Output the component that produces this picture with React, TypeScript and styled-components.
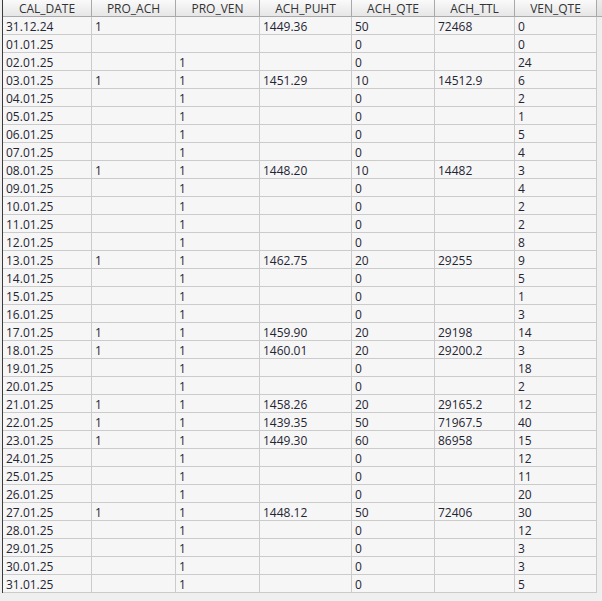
import React from "react";
import styled, { createGlobalStyle } from "styled-components";

const Global = createGlobalStyle`
  html, body { margin: 0; padding: 0; background: #efefef; }
  body { font-family: "Open Sans", "Noto Sans", sans-serif; font-size: 12px; }
`;

const COLS = "89px 84px 84px 92px 83px 80px 82px";

const Frame = styled.div`
  width: 602px;
  height: 601px;
  padding-left: 2px;
  box-sizing: border-box;
  background: #efefef;
  overflow: hidden;
`;

const Table = styled.div`
  border-left: 1px solid #3a3a3a;
  display: flex;
  flex-direction: column;
`;

const HeaderRow = styled.div`
  display: grid;
  grid-template-columns: ${COLS} 1fr;
  height: 17px;
`;

const HeadCell = styled.div`
  box-sizing: border-box;
  border-right: 1px solid #a9a9a9;
  border-bottom: 1px solid #a9a9a9;
  background: linear-gradient(#fafafa, #e6e6e6);
  color: #333;
  text-align: center;
  padding-top: 1px;
  line-height: 16px;
  font-size: 12px;
  white-space: nowrap;
  overflow: hidden;
`;

const HeadFiller = styled.div`
  box-sizing: border-box;
  border-bottom: 1px solid #a9a9a9;
  background: linear-gradient(#ececec, #dedede);
`;

const Row = styled.div`
  display: grid;
  grid-template-columns: ${COLS};
  height: 18px;
`;

const Cell = styled.div`
  box-sizing: border-box;
  border-right: 1px solid #cbcbcb;
  border-bottom: 1px solid #cbcbcb;
  background: #f6f6f6;
  color: #1f2533;
  padding-left: 3px;
  padding-top: 1px;
  line-height: 17px;
  font-size: 12px;
  white-space: nowrap;
  overflow: hidden;
`;

const headers = ["CAL_DATE", "PRO_ACH", "PRO_VEN", "ACH_PUHT", "ACH_QTE", "ACH_TTL", "VEN_QTE"];

const data: string[][] = [
  ["31.12.24", "1", "", "1449.36", "50", "72468", "0"],
  ["01.01.25", "", "", "", "0", "", "0"],
  ["02.01.25", "", "1", "", "0", "", "24"],
  ["03.01.25", "1", "1", "1451.29", "10", "14512.9", "6"],
  ["04.01.25", "", "1", "", "0", "", "2"],
  ["05.01.25", "", "1", "", "0", "", "1"],
  ["06.01.25", "", "1", "", "0", "", "5"],
  ["07.01.25", "", "1", "", "0", "", "4"],
  ["08.01.25", "1", "1", "1448.20", "10", "14482", "3"],
  ["09.01.25", "", "1", "", "0", "", "4"],
  ["10.01.25", "", "1", "", "0", "", "2"],
  ["11.01.25", "", "1", "", "0", "", "2"],
  ["12.01.25", "", "1", "", "0", "", "8"],
  ["13.01.25", "1", "1", "1462.75", "20", "29255", "9"],
  ["14.01.25", "", "1", "", "0", "", "5"],
  ["15.01.25", "", "1", "", "0", "", "1"],
  ["16.01.25", "", "1", "", "0", "", "3"],
  ["17.01.25", "1", "1", "1459.90", "20", "29198", "14"],
  ["18.01.25", "1", "1", "1460.01", "20", "29200.2", "3"],
  ["19.01.25", "", "1", "", "0", "", "18"],
  ["20.01.25", "", "1", "", "0", "", "2"],
  ["21.01.25", "1", "1", "1458.26", "20", "29165.2", "12"],
  ["22.01.25", "1", "1", "1439.35", "50", "71967.5", "40"],
  ["23.01.25", "1", "1", "1449.30", "60", "86958", "15"],
  ["24.01.25", "", "1", "", "0", "", "12"],
  ["25.01.25", "", "1", "", "0", "", "11"],
  ["26.01.25", "", "1", "", "0", "", "20"],
  ["27.01.25", "1", "1", "1448.12", "50", "72406", "30"],
  ["28.01.25", "", "1", "", "0", "", "12"],
  ["29.01.25", "", "1", "", "0", "", "3"],
  ["30.01.25", "", "1", "", "0", "", "3"],
  ["31.01.25", "", "1", "", "0", "", "5"],
];

export default function App() {
  return (
    <Frame>
      <Global />
      <Table>
        <HeaderRow>
          {headers.map((h) => (
            <HeadCell key={h}>{h}</HeadCell>
          ))}
          <HeadFiller />
        </HeaderRow>
        {data.map((r) => (
          <Row key={r[0]}>
            {r.map((v, i) => (
              <Cell key={i}>{v}</Cell>
            ))}
          </Row>
        ))}
      </Table>
    </Frame>
  );
}
